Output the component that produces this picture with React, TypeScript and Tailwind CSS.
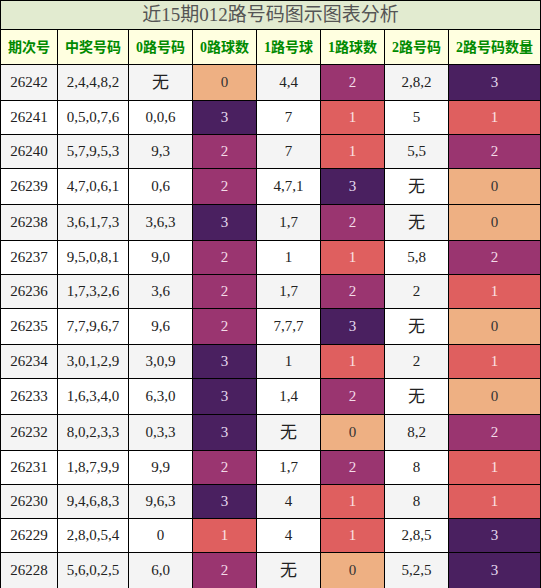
import React from "react";

type Row = [string, string, string, number, string, number, string, number];

const rows: Row[] = [
  ["26242", "2,4,4,8,2", "无", 0, "4,4", 2, "2,8,2", 3],
  ["26241", "0,5,0,7,6", "0,0,6", 3, "7", 1, "5", 1],
  ["26240", "5,7,9,5,3", "9,3", 2, "7", 1, "5,5", 2],
  ["26239", "4,7,0,6,1", "0,6", 2, "4,7,1", 3, "无", 0],
  ["26238", "3,6,1,7,3", "3,6,3", 3, "1,7", 2, "无", 0],
  ["26237", "9,5,0,8,1", "9,0", 2, "1", 1, "5,8", 2],
  ["26236", "1,7,3,2,6", "3,6", 2, "1,7", 2, "2", 1],
  ["26235", "7,7,9,6,7", "9,6", 2, "7,7,7", 3, "无", 0],
  ["26234", "3,0,1,2,9", "3,0,9", 3, "1", 1, "2", 1],
  ["26233", "1,6,3,4,0", "6,3,0", 3, "1,4", 2, "无", 0],
  ["26232", "8,0,2,3,3", "0,3,3", 3, "无", 0, "8,2", 2],
  ["26231", "1,8,7,9,9", "9,9", 2, "1,7", 2, "8", 1],
  ["26230", "9,4,6,8,3", "9,6,3", 3, "4", 1, "8", 1],
  ["26229", "2,8,0,5,4", "0", 1, "4", 1, "2,8,5", 3],
  ["26228", "5,6,0,2,5", "6,0", 2, "无", 0, "5,2,5", 3],
];

const countStyle: Record<number, string> = {
  0: "bg-[#eeb083] text-[#333]",
  1: "bg-[#df5f5f] text-[#fbe4e4]",
  2: "bg-[#9a3570] text-[#f3dce8]",
  3: "bg-[#4a2060] text-[#e6dcef]",
};

const headers = ["期次号", "中奖号码", "0路号码", "0路球数", "1路号球", "1路球数", "2路号码", "2路号码数量"];

function Cell({ v }: { v: string }) {
  return (
    <td className={`border border-black text-center text-[#222] ${v === "无" ? "text-[17px] leading-none" : ""}`}>
      {v}
    </td>
  );
}

function Count({ n }: { n: number }) {
  return <td className={`border border-black text-center ${countStyle[n]}`}>{n}</td>;
}

export default function App() {
  return (
    <div className="w-[541px] h-[588px] overflow-hidden bg-white">
      <table
        className="w-[541px] table-fixed border-collapse text-[15px]"
        style={{ fontFamily: '"Liberation Serif", "Noto Sans CJK SC", serif' }}
      >
        <colgroup>
          <col className="w-[57px]" />
          <col className="w-[71px]" />
          <col className="w-[64px]" />
          <col className="w-[64px]" />
          <col className="w-[64px]" />
          <col className="w-[64px]" />
          <col className="w-[64px]" />
          <col className="w-[92px]" />
        </colgroup>
        <thead>
          <tr className="h-[29px]">
            <th
              colSpan={8}
              className="border border-black bg-[#e2ebd0] text-[19px] font-normal text-[#555] leading-[26px]"
            >
              近15期012路号码图示图表分析
            </th>
          </tr>
          <tr className="h-[35px] bg-[#ffffe0]">
            {headers.map((h) => (
              <th key={h} className="border border-black text-[14px] font-bold text-[#008a00]">
                {h}
              </th>
            ))}
          </tr>
        </thead>
        <tbody>
          {rows.map((r, i) => {
            const tall = r.includes("无");
            return (
              <tr
                key={r[0]}
                className={`${tall ? "h-[36px]" : "h-[34px]"} ${i % 2 === 0 ? "bg-[#f4f4f4]" : "bg-white"}`}
              >
                <Cell v={r[0]} />
                <Cell v={r[1]} />
                <Cell v={r[2]} />
                <Count n={r[3]} />
                <Cell v={r[4]} />
                <Count n={r[5]} />
                <Cell v={r[6]} />
                <Count n={r[7]} />
              </tr>
            );
          })}
        </tbody>
      </table>
    </div>
  );
}
